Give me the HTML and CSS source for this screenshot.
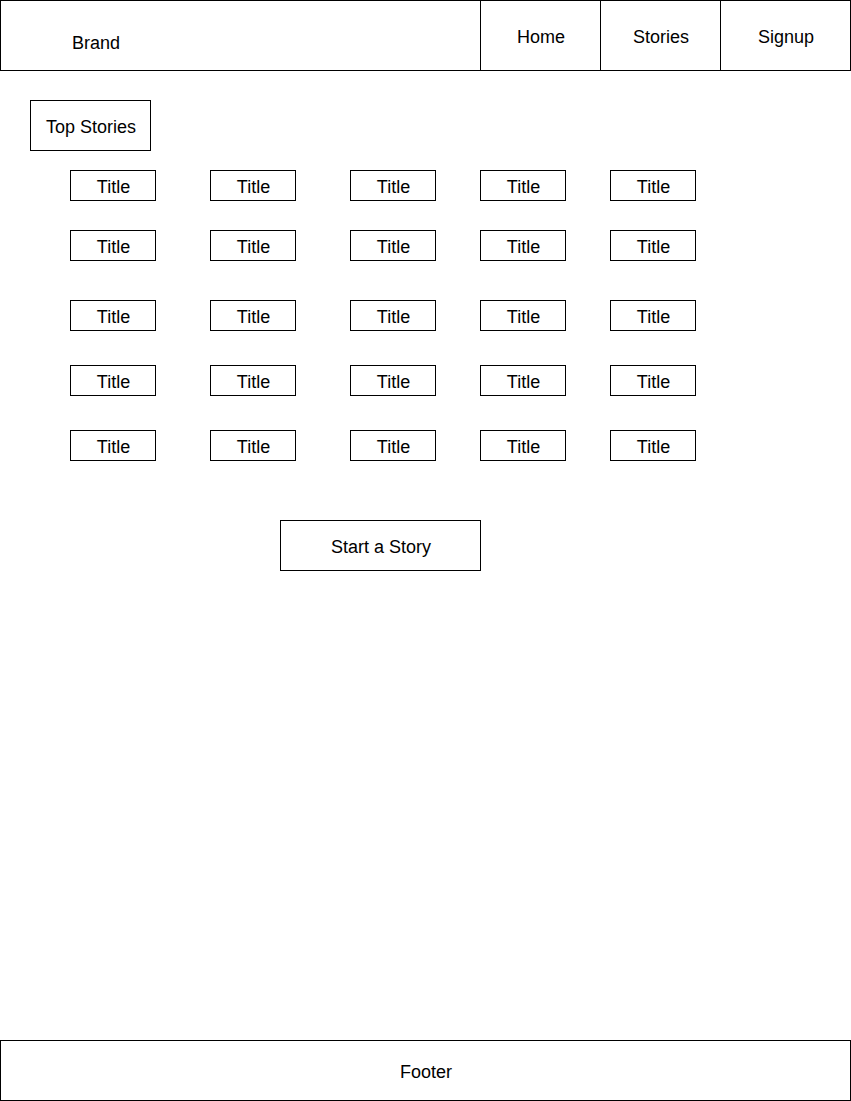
FILE: index.html
```html
<!DOCTYPE html>
<html lang="en">
<head>
<meta charset="utf-8">
<title>Stories</title>
<link rel="stylesheet" href="styles.css">
</head>
<body>
<header class="header">
  <div class="brand">Brand</div>
  <nav class="nav">
    <a class="nav-item">Home</a>
    <a class="nav-item">Stories</a>
    <a class="nav-item nav-item-last">Signup</a>
  </nav>
</header>
<main class="main">
  <div class="box top-stories">Top Stories</div>
  <div class="grid">
    <div class="box title">Title</div><div class="box title">Title</div><div class="box title">Title</div><div class="box title">Title</div><div class="box title">Title</div>
    <div class="box title">Title</div><div class="box title">Title</div><div class="box title">Title</div><div class="box title">Title</div><div class="box title">Title</div>
    <div class="box title">Title</div><div class="box title">Title</div><div class="box title">Title</div><div class="box title">Title</div><div class="box title">Title</div>
    <div class="box title">Title</div><div class="box title">Title</div><div class="box title">Title</div><div class="box title">Title</div><div class="box title">Title</div>
    <div class="box title">Title</div><div class="box title">Title</div><div class="box title">Title</div><div class="box title">Title</div><div class="box title">Title</div>
  </div>
  <div class="box start">Start a Story</div>
</main>
<footer class="box footer">Footer</footer>
</body>
</html>
```

FILE: styles.css
```css
* { box-sizing: border-box; }
html, body { margin: 0; padding: 0; }
body {
  width: 851px;
  min-height: 100vh;
  display: flex;
  flex-direction: column;
  font-family: "Liberation Sans", Arial, sans-serif;
  font-size: 18px;
  line-height: 20px;
  color: #000;
  background: #fff;
}
.header {
  display: flex;
  width: 851px;
  height: 71px;
  border: 1px solid #000;
}
.brand {
  width: 479px;
  display: flex;
  align-items: center;
  padding: 14px 0 0 71px;
}
.nav { display: flex; }
.nav-item {
  width: 120px;
  border-left: 1px solid #000;
  display: flex;
  align-items: center;
  justify-content: center;
  padding: 2px 0 0 1px;
}
.nav-item-last { width: 130px; }
.main {
  display: flex;
  flex-direction: column;
  align-items: flex-start;
  padding: 29px 0 0 30px;
}
.box {
  border: 1px solid #000;
  display: flex;
  align-items: center;
  justify-content: center;
  padding: 2px 0 0 1px;
}
.top-stories { width: 121px; height: 51px; }
.grid {
  margin: 19px 0 0 40px;
  display: grid;
  grid-template-columns: 140px 140px 130px 130px 86px;
  grid-template-rows: 60px 70px 65px 65px 31px;
}
.title { width: 86px; height: 31px; }
.start {
  width: 201px;
  height: 51px;
  margin: 59px 0 0 250px;
}
.footer {
  margin-top: auto;
  width: 851px;
  height: 61px;
}
```
